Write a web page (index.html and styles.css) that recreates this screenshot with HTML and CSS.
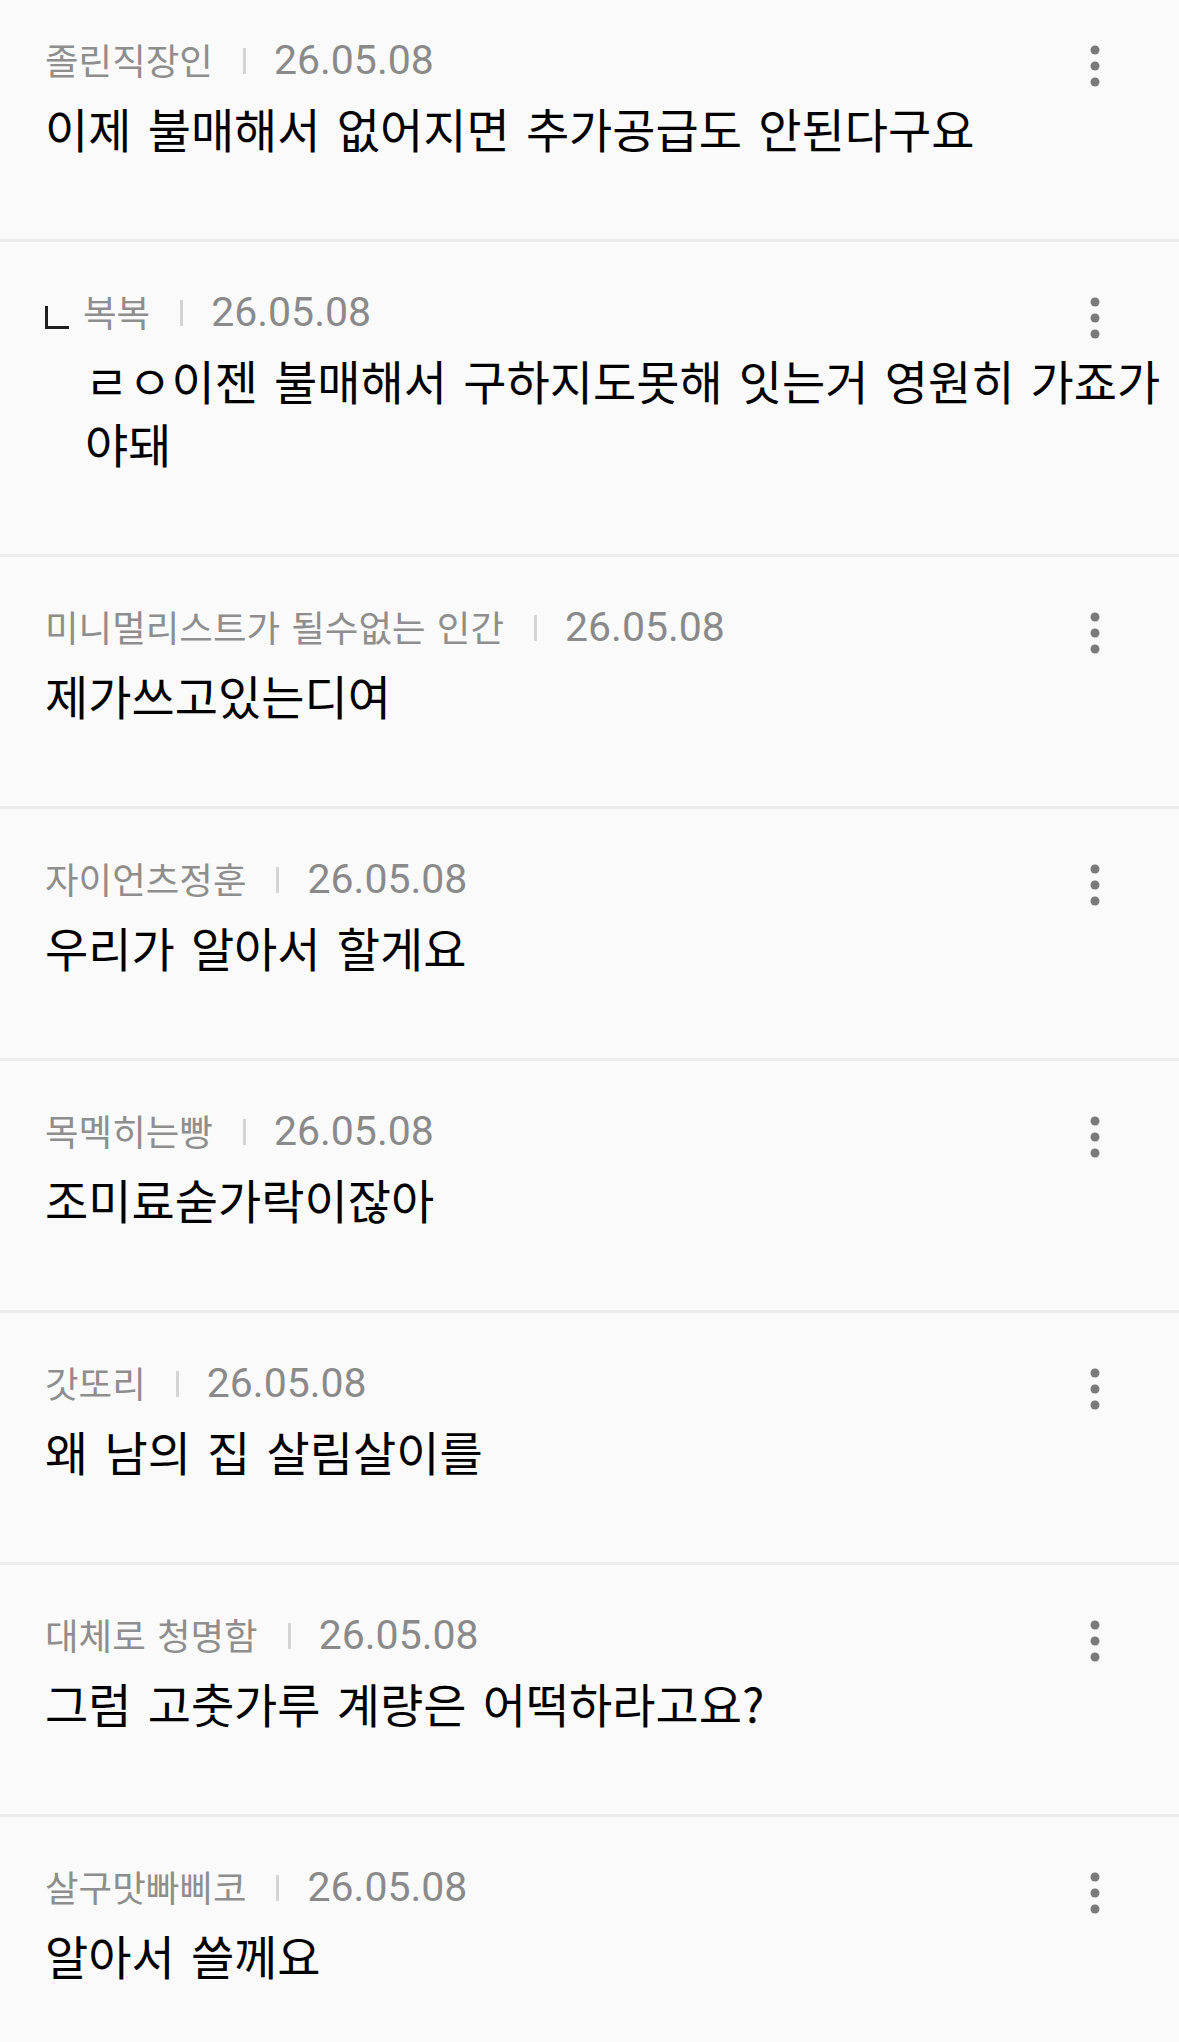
FILE: index.html
```html
<!DOCTYPE html>
<html lang="ko">
<head>
    <meta charset="UTF-8">
    <meta name="viewport" content="width=device-width, initial-scale=1.0">
    <title>댓글</title>
    <link rel="stylesheet" href="styles.css">
</head>
<body>
    <div class="comments">

        <div class="comment first">
            <div class="meta">
                <span class="name">졸린직장인</span>
                <span class="sep"></span>
                <span class="date">26.05.08</span>
                <svg class="more" viewBox="0 0 10 42" width="10" height="42"><circle cx="5" cy="5" r="4.5"/><circle cx="5" cy="21" r="4.5"/><circle cx="5" cy="37" r="4.5"/></svg>
            </div>
            <p class="body">이제 불매해서 없어지면 추가공급도 안된다구요</p>
        </div>

        <div class="comment reply">
            <div class="meta">
                <span class="reply-mark"></span>
                <span class="name">복복</span>
                <span class="sep"></span>
                <span class="date">26.05.08</span>
                <svg class="more" viewBox="0 0 10 42" width="10" height="42"><circle cx="5" cy="5" r="4.5"/><circle cx="5" cy="21" r="4.5"/><circle cx="5" cy="37" r="4.5"/></svg>
            </div>
            <p class="body">ㄹㅇ이젠 불매해서 구하지도못해 잇는거 영원히 가죠가야돼</p>
        </div>

        <div class="comment">
            <div class="meta">
                <span class="name">미니멀리스트가 될수없는 인간</span>
                <span class="sep"></span>
                <span class="date">26.05.08</span>
                <svg class="more" viewBox="0 0 10 42" width="10" height="42"><circle cx="5" cy="5" r="4.5"/><circle cx="5" cy="21" r="4.5"/><circle cx="5" cy="37" r="4.5"/></svg>
            </div>
            <p class="body">제가쓰고있는디여</p>
        </div>

        <div class="comment">
            <div class="meta">
                <span class="name">자이언츠정훈</span>
                <span class="sep"></span>
                <span class="date">26.05.08</span>
                <svg class="more" viewBox="0 0 10 42" width="10" height="42"><circle cx="5" cy="5" r="4.5"/><circle cx="5" cy="21" r="4.5"/><circle cx="5" cy="37" r="4.5"/></svg>
            </div>
            <p class="body">우리가 알아서 할게요</p>
        </div>

        <div class="comment">
            <div class="meta">
                <span class="name">목멕히는빵</span>
                <span class="sep"></span>
                <span class="date">26.05.08</span>
                <svg class="more" viewBox="0 0 10 42" width="10" height="42"><circle cx="5" cy="5" r="4.5"/><circle cx="5" cy="21" r="4.5"/><circle cx="5" cy="37" r="4.5"/></svg>
            </div>
            <p class="body">조미료숟가락이잖아</p>
        </div>

        <div class="comment">
            <div class="meta">
                <span class="name">갓또리</span>
                <span class="sep"></span>
                <span class="date">26.05.08</span>
                <svg class="more" viewBox="0 0 10 42" width="10" height="42"><circle cx="5" cy="5" r="4.5"/><circle cx="5" cy="21" r="4.5"/><circle cx="5" cy="37" r="4.5"/></svg>
            </div>
            <p class="body">왜 남의 집 살림살이를</p>
        </div>

        <div class="comment">
            <div class="meta">
                <span class="name">대체로 청명함</span>
                <span class="sep"></span>
                <span class="date">26.05.08</span>
                <svg class="more" viewBox="0 0 10 42" width="10" height="42"><circle cx="5" cy="5" r="4.5"/><circle cx="5" cy="21" r="4.5"/><circle cx="5" cy="37" r="4.5"/></svg>
            </div>
            <p class="body">그럼 고춧가루 계량은 어떡하라고요?</p>
        </div>

        <div class="comment">
            <div class="meta">
                <span class="name">살구맛빠삐코</span>
                <span class="sep"></span>
                <span class="date">26.05.08</span>
                <svg class="more" viewBox="0 0 10 42" width="10" height="42"><circle cx="5" cy="5" r="4.5"/><circle cx="5" cy="21" r="4.5"/><circle cx="5" cy="37" r="4.5"/></svg>
            </div>
            <p class="body">알아서 쓸께요</p>
        </div>

    </div>
</body>
</html>
```

FILE: styles.css
```css
body, html {
    margin: 0;
    padding: 0;
    background-color: #fafafa;
    font-family: "Noto Sans CJK KR", sans-serif;
}

.comment {
    padding: 45px 8px 80px 45px;
    border-bottom: 3px solid #ececec;
}

.comment.first {
    padding-top: 35px;
}

.meta {
    display: flex;
    align-items: center;
    height: 50px;
    padding-right: 71px;
    color: #8e8e8e;
}

.name {
    font-size: 36.5px;
    word-spacing: 1px;
    line-height: 50px;
    white-space: nowrap;
}

.sep {
    flex-shrink: 0;
    width: 3px;
    height: 26px;
    margin: 2px 28px 0 30px;
    background-color: #d4d4d4;
}

.date {
    font-family: Roboto, "Noto Sans CJK KR", sans-serif;
    font-size: 41px;
    line-height: 50px;
    color: #8a8a8a;
}

.more {
    margin-left: auto;
    margin-top: 12px;
    fill: #7a7a7a;
}

.reply-mark {
    flex-shrink: 0;
    width: 24px;
    height: 23px;
    margin: 10px 14px 0 0;
    border-left: 3px solid #1f1f1f;
    border-bottom: 3px solid #1f1f1f;
    box-sizing: border-box;
}

.body {
    margin: 11px 0 0 0;
    font-size: 47px;
    line-height: 63px;
    word-spacing: 3px;
    color: #000;
}

.reply .body {
    padding-left: 40px;
}
```
